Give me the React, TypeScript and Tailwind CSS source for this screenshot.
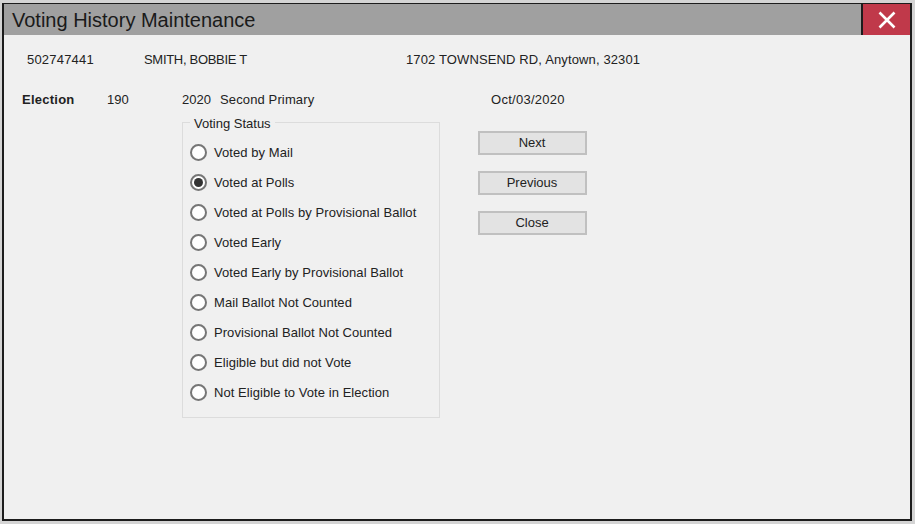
const statuses = [
  "Voted by Mail",
  "Voted at Polls",
  "Voted at Polls by Provisional Ballot",
  "Voted Early",
  "Voted Early by Provisional Ballot",
  "Mail Ballot Not Counted",
  "Provisional Ballot Not Counted",
  "Eligible but did not Vote",
  "Not Eligible to Vote in Election",
]

function Radio({ label, checked }: { label: string; checked: boolean }) {
  return (
    <div className="flex h-[30px] items-center">
      <span className="flex h-[17px] w-[17px] items-center justify-center rounded-full border-2 border-[#767676] bg-white">
        {checked && <span className="h-[9px] w-[9px] rounded-full bg-[#333333]" />}
      </span>
      <span className="ml-[7px] pt-[2px] text-[13px] tracking-[0.06px] text-[#222222]">{label}</span>
    </div>
  )
}

function Button({ label }: { label: string }) {
  return (
    <button className="h-[24px] w-[109px] border-2 border-[#c0c0c0] bg-[#e3e3e3] pr-[1px] text-[13px] text-[#222222]">
      {label}
    </button>
  )
}

export default function App() {
  return (
    <div className="h-[524px] w-[915px] bg-[#d4d4d4] pt-[3px] pr-[3px] pb-[3px] pl-[2px] font-['Liberation_Sans',Arial,sans-serif]">
      <div className="flex h-full flex-col border-2 border-t border-[#1c1c1c] bg-[#f0f0f0]">
        <div className="flex h-[31px] shrink-0 items-center justify-between bg-[#a0a0a0]">
          <div className="pl-2 text-[20px] text-[#1a1a1a]">Voting History Maintenance</div>
          <div className="flex h-full w-[49px] items-center justify-center border-l-2 border-[#1c1c1c] bg-[#c0394a] pl-[1px]">
            <svg width="18" height="18" viewBox="0 0 18 18" fill="none" stroke="white" strokeWidth="2.6">
              <path d="M1.5 1.5 L16.5 16.5 M16.5 1.5 L1.5 16.5" />
            </svg>
          </div>
        </div>

        <div className="mt-[18px] flex h-[14px] items-center text-[13px] tracking-[0.1px] text-[#222222]">
          <span className="ml-[23px] w-[117px] tracking-[0.2px]">502747441</span>
          <span className="w-[262px] tracking-[-0.3px]">SMITH, BOBBIE T</span>
          <span className="tracking-[0.13px]">1702 TOWNSEND RD, Anytown, 32301</span>
        </div>

        <div className="mt-[26px] flex h-[14px] items-center text-[13px] text-[#222222]">
          <span className="ml-[18px] w-[85px] font-bold tracking-[0.25px]">Election</span>
          <span className="w-[75px]">190</span>
          <span className="w-[38px]">2020</span>
          <span className="w-[271px] tracking-[0.13px]">Second Primary</span>
          <span className="tracking-[0.27px]">Oct/03/2020</span>
        </div>

        <div className="ml-[178px] mt-[8px] flex items-start">
          <fieldset className="h-[303px] w-[258px] border border-[#dcdcdc] pl-[7px] pt-[8px]">
            <legend className="translate-y-[2px] px-[4px] text-[13px] leading-[14px] text-[#222222]">Voting Status</legend>
            {statuses.map((s) => (
              <Radio key={s} label={s} checked={s === "Voted at Polls"} />
            ))}
          </fieldset>
          <div className="ml-[38px] mt-[16px] flex flex-col gap-[16px]">
            <Button label="Next" />
            <Button label="Previous" />
            <Button label="Close" />
          </div>
        </div>
      </div>
    </div>
  )
}
